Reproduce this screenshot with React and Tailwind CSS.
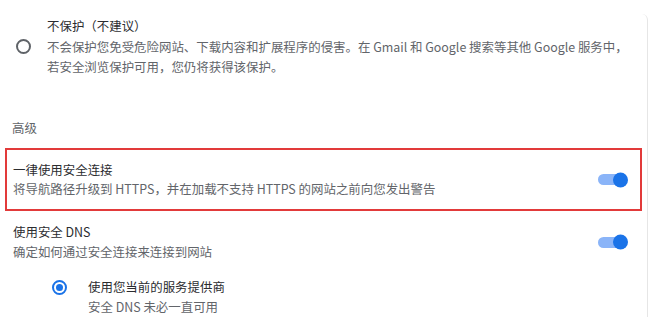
const Toggle = () => (
  <div className="relative h-[11px] w-[30px] shrink-0">
    <div className="absolute inset-y-0 left-0 right-[2px] rounded-full bg-[#8ab4f8]" />
    <div className="absolute right-0 top-1/2 h-[15px] w-[15px] -translate-y-1/2 rounded-full bg-[#1a73e8]" />
  </div>
);

export default function App() {
  return (
    <div className="h-[317px] w-[652px] overflow-hidden bg-white font-['Noto_Sans_CJK_SC','Noto_Sans',sans-serif] text-[12.45px] leading-[20px] text-[#2b2c2f]">
      <div className="mr-[4px] mt-[14px] rounded-tr-md border-r border-[#e6e6e6]">
        {/* standard protection off */}
        <div className="flex pt-[2px]">
          <div className="flex w-[47px] shrink-0 items-center justify-center">
            <div className="h-[15px] w-[15px] rounded-full border-2 border-[#5f6368]" />
          </div>
          <div className="pr-2">
            <p className="leading-[21px]">不保护（不建议）</p>
            <p className="text-[#62656a]">
              不会保护您免受危险网站、下载内容和扩展程序的侵害。在 Gmail 和 Google 搜索等其他 Google 服务中，
            </p>
            <p className="text-[#62656a]">若安全浏览保护可用，您仍将获得该保护。</p>
          </div>
        </div>

        <p className="mt-[41px] pl-[12px] text-[#62656a]">高级</p>

        <div className="ml-[5px] mr-[5px] mt-[10px] flex h-[63px] items-center justify-between border-2 border-[#e23a3a] pl-[6px] pr-[12px]">
          <div className="pt-[1px]">
            <p className="leading-[19px]">一律使用安全连接</p>
            <p className="leading-[19px] text-[#62656a]">将导航路径升级到 HTTPS，并在加载不支持 HTTPS 的网站之前向您发出警告</p>
          </div>
          <Toggle />
        </div>

        <div className="mt-[11px] flex items-center justify-between pl-[13px] pr-[19px]">
          <div>
            <p>使用安全 DNS</p>
            <p className="text-[#62656a]">确定如何通过安全连接来连接到网站</p>
          </div>
          <Toggle />
        </div>

        <div className="mt-[15px] flex">
          <div className="flex h-[20px] w-[88px] shrink-0 items-center justify-end pr-[21px]">
            <div className="flex h-[15px] w-[15px] items-center justify-center rounded-full border-2 border-[#1a73e8]">
              <div className="h-[7px] w-[7px] rounded-full bg-[#1a73e8]" />
            </div>
          </div>
          <div>
            <p>使用您当前的服务提供商</p>
            <p className="text-[#62656a]">安全 DNS 未必一直可用</p>
          </div>
        </div>
      </div>
    </div>
  );
}
